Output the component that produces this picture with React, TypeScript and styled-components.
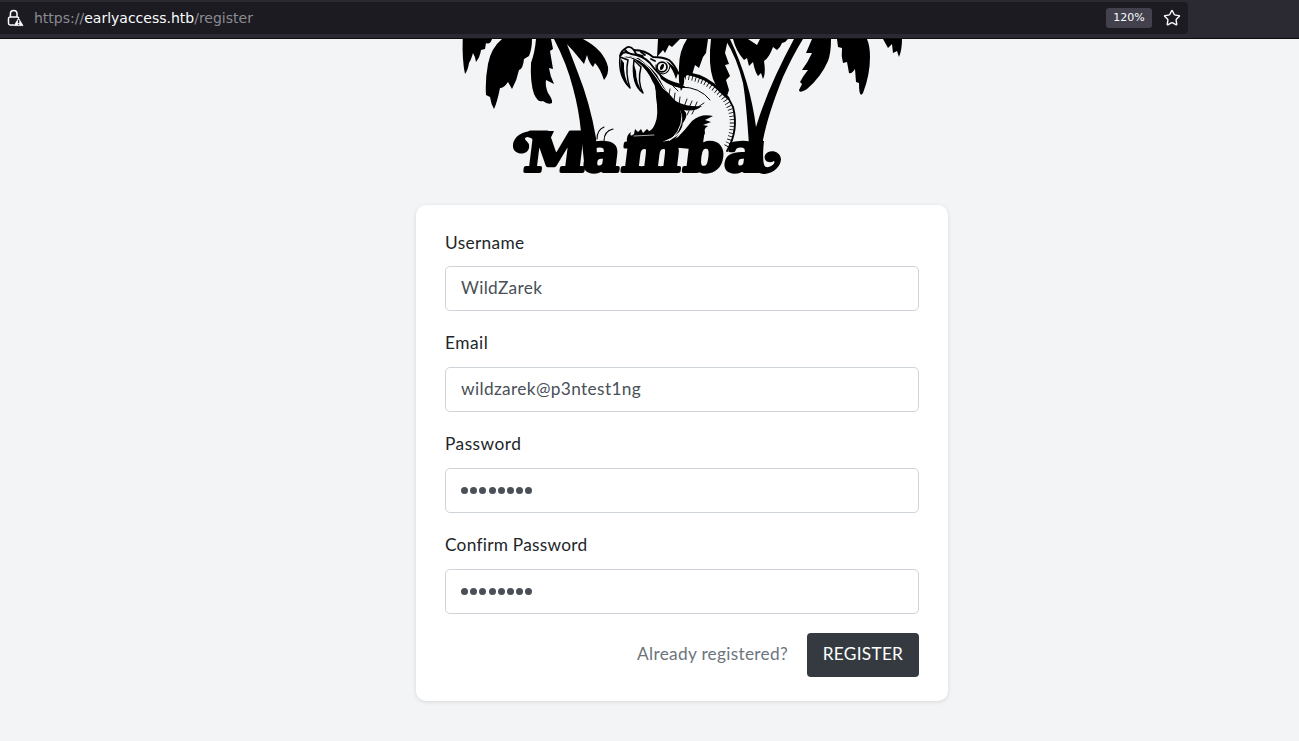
import React from 'react';
import styled, { createGlobalStyle } from 'styled-components';
import { Star } from 'lucide-react';

const GlobalStyle = createGlobalStyle`
  * { box-sizing: border-box; }
  body { margin: 0; background: #f3f4f6; font-family: 'Lato', sans-serif; overflow: hidden; }
`;

const Page = styled.div`
  height: 741px;
  display: flex;
  flex-direction: column;
  align-items: center;
`;

const BrowserBar = styled.header`
  width: 100%;
  height: 39px;
  flex: none;
  padding: 2px 0 3px;
  background: #2b2a33;
  border-bottom: 1px solid #0c0c0d;
`;

const AddressField = styled.div`
  width: 1188px;
  height: 32px;
  display: flex;
  align-items: center;
  padding: 0 7px 0 7px;
  border-radius: 0 4px 4px 0;
  background: #1c1b22;
  color: #fbfbfe;
  svg { flex: none; }
`;

const Url = styled.div`
  flex: 1;
  margin-left: 10px;
  color: #8c8b92;
  font: 14px/20px 'DejaVu Sans', sans-serif;
  b { font-weight: 400; color: #fbfbfe; }
`;

const Zoom = styled.span`
  width: 46px;
  margin-right: 11px;
  border-radius: 3px;
  background: #42414d;
  text-align: center;
  font: 11px/20px 'DejaVu Sans', sans-serif;
`;

const Logo = styled.svg`
  display: block;
  width: 460px;
  height: 150px;
  flex: none;
  margin: 0 0 16px 61px;
`;

const Wordmark = styled.text`
  font: 700 53px 'DejaVu Serif', serif;
  stroke: #000;
  stroke-width: 3.8px;
  stroke-linejoin: round;
`;

const Card = styled.form`
  width: 532px;
  height: 496px;
  margin-left: 65px;
  padding: 25px 29px 0;
  border-radius: 10px;
  background: #fff;
  box-shadow: 0 1px 4px rgba(0, 0, 0, 0.12);
`;

const Field = styled.div`
  height: 101px;
  & + & > label { line-height: 24px; }
`;

const Fitted = styled.span<{ $spacing: number }>`
  letter-spacing: ${(p) => p.$spacing}px;
`;

const Label = styled.label`
  display: block;
  height: 36px;
  color: #212529;
  font-size: 17.3px;
  line-height: 26px;
`;

const Entry = styled.div`
  height: 45px;
  padding: 0 15px;
  border: 1px solid #ced4da;
  border-radius: 5px;
  color: #495057;
  font-size: 17.3px;
  line-height: 41px;
`;

const Dots = styled.div`
  display: flex;
  align-items: center;
  gap: 2.05px;
  height: 43px;
  padding-left: 0.4px;
  i { width: 7px; height: 7px; border-radius: 50%; background: #495057; }
`;

const Actions = styled.div`
  display: flex;
  justify-content: flex-end;
  align-items: center;
  gap: 19px;
  margin-top: -1px;
  font-size: 17.3px;
`;

const Login = styled.a`
  padding-bottom: 4px;
  color: #6c757d;
`;

const Register = styled.button`
  width: 112px;
  height: 44px;
  padding: 0 0 4px;
  border: 0;
  border-radius: 4px;
  background: #343a40;
  color: #fff;
  font: 17.3px 'Lato', sans-serif;
`;

const PAPER = '#f3f4f6';

const LEAVES = [
  'M462.7 39Q462 60 465 74Q468 70 469 63Q471 60 473 53Q475 56 476 62Q480 57 481 50L485 49L486 43Q490 45 492 39Z',
  'M502 39Q491 48 488 64Q485 80 486 95L490 97Q491 104 494 109Q497 103 500 88Q504 88 508 82L512 89Q517 80 519 70Q523 69 524 59L529 56Q532 49 532 39Z',
  'M536 39Q535 52 531 63Q530 82 534 94Q538 103 543 101Q548 105 552 103Q553 100 548 93Q545 86 546 80L554 84Q550 76 549 68L553 69L550 51L553 49L551 39Z',
  'M562 39Q574 51 584 64L587 55Q589 63 593 67L595 63Q600 68 604 80Q609 74 608 67Q604 50 583 39Z',
  'M658 39L657 57L663 50L665 53L669 45L672 47L680 39Z',
  'M687 39Q679 51 679 67Q678 82 681 91Q685 84 684 78L689 73L692 75L695 65L699 68L703 57L706 53L708 39Z',
  'M711 39Q708 64 713 79Q718 92 727 96L729 90L726 80L730 76L725 65L729 64L725 53L728 39Z',
  'M733 39Q736 51 744 60L747 58L749 66L753 62Q755 72 758 76L761 73L763 79Q766 74 764 61Q769 58 773 47L777 50Q780 48 782 43L785 42L788 39L760 39L757 45L748 39Z',
  'M812 39L806 53L812 53Q808 62 802 70L808 70Q803 76 800 82L802 84L799 90Q799 94 807 89Q821 77 828 61Q831 53 831 39Z',
  'M837 39L838 47L842 48Q841 56 843 63L847 62L849 73Q852 74 855 69L856 82L859 83Q859 99 863 93Q870 75 870 57Q870 46 867 39Z',
  'M883 39L888 48L892 44L893 53L897 51L899 57Q902 50 902 39Z',
];

const TRUNKS = [
  'M554 39Q567 64 573 88Q579 110 581 132L584 162L597 155L596 138Q590 103 578 73L565 39Z',
  'M725 39Q737 58 743 83Q747 107 750 163H762L763 140Q768 114 783 77Q793 55 803 39H794Q768 87 756 127Q750 81 730 39Z',
];

const InsecureLock = () => (
  <svg width="17" height="18" viewBox="0 0 17 18" fill="none">
    <path d="M3.4 8V4.8a3.3 3.3 0 0 1 6.6 0V8M7 16H3.2A1.7 1.7 0 0 1 1.5 14.300V9.700A1.700 1.700 0 0 1 3.200 8H10Q11.500 8 11.800 9" stroke="#fbfbfe" strokeWidth="1.5" />
    <path d="M11.600 9.300 16 16.600H7.200Z" fill="#fbfbfe" stroke="#fbfbfe" strokeWidth=".8" strokeLinejoin="round" />
    <path d="M11.600 11v3M11.600 14.800v1" stroke="#1c1b22" strokeWidth="1.300" />
  </svg>
);

const Snake = () => (
  <g strokeLinecap="round" strokeLinejoin="round">
    <path
      d="M620 56Q621 51 626 48Q630 45 634 50Q645 50 653 57Q663 57 669 60Q675 65 678 73Q696 73 711 83Q727 92 732 107Q738 130 727 152L660 150Q640 110 650 80Z"
      fill={PAPER}
      stroke="none"
    />
    <path d="M624 57Q637 57 647 71Q656 82 657 97Q660 113 657 121Q654 131 644 133L633 137L626 144L665 148Q684 134 683 118Q682 106 670 95Q662 86 657 75Q646 61 630 56Z" />
    <path d="M650 80Q656 88 657 100Q659 118 654 130L650 150H627Q615 110 622 90H640Z" fill={PAPER} />
    <path d="M652 76Q656 86 656 97Q659 115 655 124Q652 132 644 133L633 137L626 146H665L674 110L660 80Z" />
    <path d="M620 56Q621 51 626 48Q630 45 634 50Q645 50 653 57Q663 57 669 60Q675 65 678 73Q696 73 711 83Q727 92 733 107Q739 130 727 151" fill="none" stroke="#000" strokeWidth="1.900" />
    <path d="M679 73Q699 73 714 85L728 98" fill="none" stroke="#000" strokeWidth="3" />
    <path d="M685 77Q702 79 714 89Q727 99 731 112Q735 131 726 147" fill="none" stroke="#000" strokeWidth="5" strokeLinecap="butt" strokeDasharray=".8 2.600" />
    <path d="M620 57Q618 76 630 88Q625 73 628 60ZM634 60Q631 84 643 93Q637 82 641 67Z" fill={PAPER} stroke="#000" strokeWidth="1.500" />
    <path d="M621 59Q618 77 630 88Q623 76 624 63ZM634 65Q631 83 643 93Q636 83 636 71Z" />
    <path d="M638 60Q649 68 655 82" fill="none" stroke="#000" strokeWidth="4" />
    <path d="M627 56Q640 58 650 69Q658 79 663 88Q681 101 682 116Q682 133 665 144" fill="none" stroke={PAPER} strokeWidth="1" />
    <path d="M621 55Q624 50 631 54Q642 55 650 63Q658 74 666 80Q674 87 684 87M634 50L636 54L643 56M625 50L628 53M641 52L645 55M651 59L655 61" fill="none" stroke="#000" strokeWidth="1.800" />
    <path d="M659 74Q668 81 681 84L682 88Q671 87 661 79ZM666 61Q674 65 678 73L676 79Q673 69 666 61Z" />
    <ellipse cx="662" cy="67" rx="5" ry="4.800" fill={PAPER} stroke="#000" strokeWidth="1.700" />
    <ellipse cx="662" cy="67" rx="1.600" ry="3.200" transform="rotate(25 662 67)" />
    <path d="M656 65Q655 73 663 74Q669 73 670 66" fill="none" stroke="#000" strokeWidth="1.100" />
    <path d="M681 87Q700 87 710 100" fill="none" stroke="#000" strokeWidth="1" />
    <path d="M666 91Q676 108 702 106Q695 112 684 110Q689 115 683 123Q683 108 666 91Z" />
    <path d="M669 95L670 89M674 101L675 93M679 105L680 97M684 107L687 99M689 108L692 101M695 107L697 102M698 107L704 103M689 111L687 115M694 110L692 114M673 86L678 91" fill="none" stroke="#000" strokeWidth=".9" />
    <path d="M713 116Q701 113 692 121Q685 130 678 137L660 146L701 150Q702 139 705 133Q703 129 708 126L703 125L711 122L705 120Z" />
    <path d="M664 142Q679 136 682 129" fill="none" stroke={PAPER} strokeWidth="1.400" />
    <path d="M627 142Q626 135 631 132Q629 138 634 134L635 129L638 132L641 129L643 133L647 129L650 132L655 126L658 139L637 145Z" />
    <path d="M634 136L654 135" fill="none" stroke={PAPER} strokeWidth=".7" />
    <path d="M597 139Q597 130 604 127M604 141Q604 131 613 129" fill="none" stroke="#000" strokeWidth="1.100" />
  </g>
);

const Password = () => (
  <Dots>{Array.from({ length: 8 }, (_, i) => <i key={i} />)}</Dots>
);

export default function App() {
  return (
    <Page>
      <GlobalStyle />
      <BrowserBar>
        <AddressField>
          <InsecureLock />
          <Url>https://<b>earlyaccess.htb</b>/register</Url>
          <Zoom>120%</Zoom>
          <Star size={18} strokeWidth={1.9} />
        </AddressField>
      </BrowserBar>
      <Logo viewBox="450 39 460 150">
        <Snake />
        {LEAVES.map((d) => <path key={d} d={d} />)}
        {TRUNKS.map((d) => <path key={d} d={d} />)}
        <Wordmark transform="translate(523 171) skewX(-7) scale(1.06 1)" x="0 56 92 150.5 189" y="0">Mamba</Wordmark>
        <path d="M554 131H531C518 132 512 140 513 147C514 155 527 156 529 148C530 142 526 142 525 139C525 136 531 136 534 141L545 150Z" />
        <path d="M752 160C753 172 760 174 765 174C774 173 781 166 781 159C780 150 768 149 765 155C763 161 769 164 774 161C776 163 771 168 766 167C762 166 763 150 764 141L750 141Z" />
      </Logo>
      <Card>
        <Field><Label><Fitted $spacing={0.33}>Username</Fitted></Label><Entry><Fitted $spacing={0.33}>WildZarek</Fitted></Entry></Field>
        <Field><Label><Fitted $spacing={0.5}>Email</Fitted></Label><Entry><Fitted $spacing={0.36}>wildzarek@p3ntest1ng</Fitted></Entry></Field>
        <Field><Label><Fitted $spacing={0.48}>Password</Fitted></Label><Entry><Password /></Entry></Field>
        <Field><Label><Fitted $spacing={0.25}>Confirm Password</Fitted></Label><Entry><Password /></Entry></Field>
        <Actions>
          <Login><Fitted $spacing={0.29}>Already registered?</Fitted></Login>
          <Register type="button"><Fitted $spacing={0.25}>REGISTER</Fitted></Register>
        </Actions>
      </Card>
    </Page>
  );
}
